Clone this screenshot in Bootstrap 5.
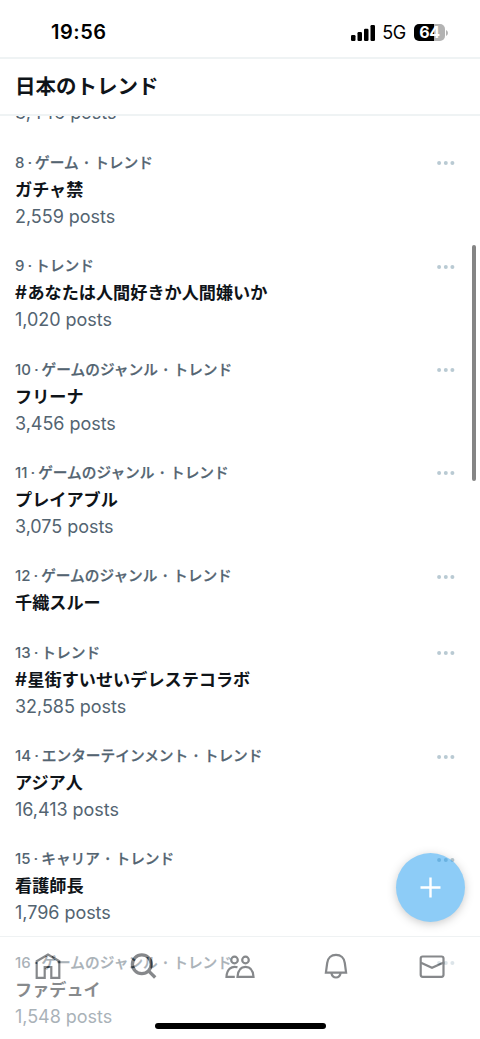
<!DOCTYPE html>
<html lang="ja">
<head>
<meta charset="utf-8">
<meta name="viewport" content="width=device-width, initial-scale=1">
<title>日本のトレンド</title>
<link rel="stylesheet" href="https://cdn.jsdelivr.net/npm/bootstrap@5.3.0/dist/css/bootstrap.min.css">
<style>
body{font-family:Inter,"Noto Sans CJK JP",sans-serif;color:#0f1419;background:#fff}
.screen{height:1039px;width:480px}
.status{height:57px;padding:8px 32px 0 51px;color:#000}
.clock{font-size:20px;font-weight:600;line-height:49px;letter-spacing:.5px}
.net{font-size:18px;line-height:49px;letter-spacing:-.3px;margin-left:7px;margin-right:8px}
.batt{width:31px;height:17px;border-radius:5px;background:linear-gradient(90deg,#000 64%,#b3b3b3 64%);color:#fff;font-size:16px;font-weight:700;line-height:17px;letter-spacing:-.3px}
.head{height:59px;padding:0 15px;border-top:2px solid #eff3f4;border-bottom:2px solid #eff3f4;background:#fff}
.head h1{font-size:20.5px;font-weight:700;line-height:56px;margin:0}
.feed{min-height:0}
.trends{margin-top:-16.6px}
.trend{padding:12.2px 15px}
.trend.cut{padding-top:0}
.meta{height:25px;font-size:14.7px;line-height:25px;font-weight:500;color:#536471;-webkit-text-stroke:.25px #536471;white-space:nowrap}
.rank{font-size:15px;line-height:1;letter-spacing:.1px;-webkit-text-stroke:0}
.d1,.d2{display:inline-block;line-height:1;text-align:center}
.d1{width:10.5px;font-weight:400}
.d2{width:15.5px;font-weight:700}
.topic{height:27px;font-size:17.15px;line-height:27px;font-weight:600;white-space:nowrap}
.hash{font-size:18.5px;line-height:1;margin-right:.5px}
.posts{height:27px;font-size:18px;line-height:27px;color:#536471;letter-spacing:-.04px}
.more{width:18px;height:4px;margin-top:10.5px;margin-right:10.5px;fill:#b9cad3}
.fab{right:15px;bottom:117px;width:69px;height:69px;background:#1d9bf0;opacity:.5;box-shadow:0 2px 8px rgba(0,0,0,.4)}
.plus{right:15px;bottom:117px;width:69px;height:69px}
.tabs{height:103px;background:#fff;opacity:.5;border-top:1px solid #e1e6e8;padding-top:13px}
.tabs svg{width:32px;height:32px;fill:none;stroke:#0f1419;stroke-width:2.2}
.homebar{left:155px;bottom:10px;width:171px;height:6px;background:#000;border-radius:3px}
.thumb{right:4px;top:245px;width:4px;height:236px;border-radius:2px;background:#858585}
</style>
<script src="https://cdn.jsdelivr.net/npm/bootstrap@5.3.0/dist/js/bootstrap.bundle.min.js"></script>
</head>
<body>
<svg class="d-none"><symbol id="dots" viewBox="0 0 18 4"><circle cx="2.1" cy="2" r="2"/><circle cx="8.8" cy="2" r="2"/><circle cx="15.4" cy="2" r="2"/></symbol></svg>
<div class="screen position-relative overflow-hidden d-flex flex-column">
  <div class="status d-flex justify-content-between align-items-center flex-shrink-0">
    <span class="clock">19:56</span>
    <div class="d-flex align-items-center">
      <svg width="24" height="16" viewBox="0 0 24 16"><rect x="0" y="10" width="4.5" height="6" rx="1.2"/><rect x="6.5" y="7" width="4.5" height="9" rx="1.2"/><rect x="13" y="3.7" width="4.5" height="12.3" rx="1.2"/><rect x="19.5" y="0" width="4.5" height="16" rx="1.2"/></svg>
      <span class="net">5G</span>
      <div class="batt text-center">64</div>
      <svg class="flex-shrink-0" width="3" height="6" viewBox="0 0 3 6"><path d="M1 0q2 1 2 3t-2 3z" fill="#b3b3b3"/></svg>
    </div>
  </div>
  <header class="head flex-shrink-0"><h1>日本のトレンド</h1></header>
  <main class="feed flex-grow-1 overflow-hidden">
    <div class="trends">
      <div class="trend cut"><div class="posts">3,446 posts</div></div>
      <div class="trend d-flex justify-content-between"><div><div class="meta"><span class="rank">8</span><span class="d1">·</span>ゲーム<span class="d2">·</span>トレンド</div><div class="topic">ガチャ禁</div><div class="posts">2,559 posts</div></div><svg class="more"><use href="#dots"/></svg></div>
      <div class="trend d-flex justify-content-between"><div><div class="meta"><span class="rank">9</span><span class="d1">·</span>トレンド</div><div class="topic"><span class="hash">#</span>あなたは人間好きか人間嫌いか</div><div class="posts">1,020 posts</div></div><svg class="more"><use href="#dots"/></svg></div>
      <div class="trend d-flex justify-content-between"><div><div class="meta"><span class="rank">10</span><span class="d1">·</span>ゲームのジャンル<span class="d2">·</span>トレンド</div><div class="topic">フリーナ</div><div class="posts">3,456 posts</div></div><svg class="more"><use href="#dots"/></svg></div>
      <div class="trend d-flex justify-content-between"><div><div class="meta"><span class="rank">11</span><span class="d1">·</span>ゲームのジャンル<span class="d2">·</span>トレンド</div><div class="topic">プレイアブル</div><div class="posts">3,075 posts</div></div><svg class="more"><use href="#dots"/></svg></div>
      <div class="trend d-flex justify-content-between"><div><div class="meta"><span class="rank">12</span><span class="d1">·</span>ゲームのジャンル<span class="d2">·</span>トレンド</div><div class="topic">千織スルー</div></div><svg class="more"><use href="#dots"/></svg></div>
      <div class="trend d-flex justify-content-between"><div><div class="meta"><span class="rank">13</span><span class="d1">·</span>トレンド</div><div class="topic"><span class="hash">#</span>星街すいせいデレステコラボ</div><div class="posts">32,585 posts</div></div><svg class="more"><use href="#dots"/></svg></div>
      <div class="trend d-flex justify-content-between"><div><div class="meta"><span class="rank">14</span><span class="d1">·</span>エンターテインメント<span class="d2">·</span>トレンド</div><div class="topic">アジア人</div><div class="posts">16,413 posts</div></div><svg class="more"><use href="#dots"/></svg></div>
      <div class="trend d-flex justify-content-between"><div><div class="meta"><span class="rank">15</span><span class="d1">·</span>キャリア<span class="d2">·</span>トレンド</div><div class="topic">看護師長</div><div class="posts">1,796 posts</div></div><svg class="more"><use href="#dots"/></svg></div>
      <div class="trend d-flex justify-content-between"><div><div class="meta"><span class="rank">16</span><span class="d1">·</span>ゲームのジャンル<span class="d2">·</span>トレンド</div><div class="topic">ファデュイ</div><div class="posts">1,548 posts</div></div><svg class="more"><use href="#dots"/></svg></div>
    </div>
  </main>
  <div class="thumb position-absolute"></div>
  <div class="fab position-absolute rounded-circle"></div>
  <svg class="plus position-absolute" viewBox="0 0 69 69"><path d="M34.5 24.5v20M24.5 34.5h20" stroke="#fff" stroke-width="2.4"/></svg>
  <nav class="tabs position-absolute bottom-0 start-0 w-100 d-flex align-items-start">
    <div class="col text-center"><svg viewBox="0 0 32 32"><path d="M4.7 11.2 16 4.6l11.3 6.6v16.7h-8V17h-6.6v10.9h-8z"/></svg></div>
    <div class="col text-center"><svg viewBox="0 0 32 32" style="stroke-width:3.3"><circle cx="13.8" cy="14.2" r="9.4"/><path d="m20.5 20.8 6.7 6.7"/></svg></div>
    <div class="col text-center"><svg viewBox="0 0 32 32"><circle cx="10.5" cy="10" r="3.3"/><circle cx="21.5" cy="10" r="3.3"/><path d="M13.5 17.3c-6.3-1.8-10.7 2.2-11 9.5h8.3"/><path d="M13.5 26.8c.5-6.6 3.5-9.9 8-9.9s7.6 3.3 8 9.9z"/></svg></div>
    <div class="col text-center"><svg viewBox="0 0 32 32"><path d="M5.9 22.7 7.2 13c.6-5 4-8.1 8.8-8.1s8.2 3.1 8.8 8.1l1.3 9.7zM11.3 23c.7 3 2.3 4.5 4.7 4.5s4-1.5 4.7-4.5"/></svg></div>
    <div class="col text-center"><svg viewBox="0 0 32 32"><rect x="4.7" y="6.5" width="22.8" height="20.3" rx="2"/><path d="m5 12.8 11 5 11.2-5"/></svg></div>
  </nav>
  <div class="homebar position-absolute"></div>
</div>
</body>
</html>
